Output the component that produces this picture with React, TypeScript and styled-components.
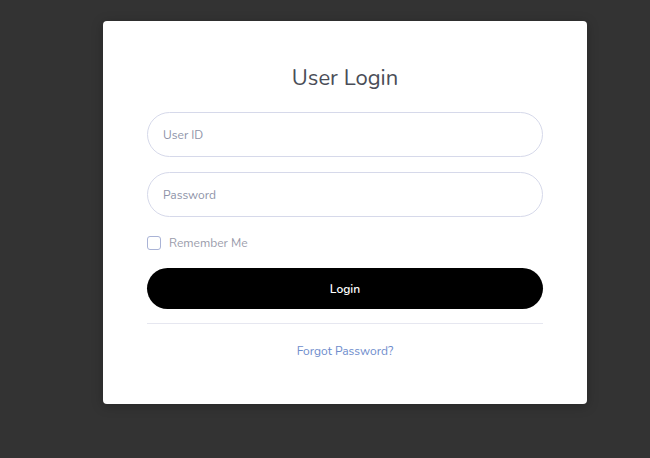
import styled, { createGlobalStyle } from "styled-components";

const GlobalStyle = createGlobalStyle`
  html, body {
    margin: 0;
    padding: 0;
    background: #333333;
  }
  * {
    box-sizing: border-box;
  }
`;

const Page = styled.div`
  min-height: 458px;
  padding: 21px 0 0 103px;
  font-family: "Nunito", Lato, "Noto Sans", sans-serif;
`;

const Card = styled.div`
  width: 484px;
  height: 383px;
  background: #ffffff;
  border-radius: 4px;
  box-shadow: 0 2px 12px rgba(0, 0, 0, 0.25);
  padding: 42px 44px 0;
  display: flex;
  flex-direction: column;
`;

const Title = styled.h1`
  margin: 0 0 19px;
  text-align: center;
  font-size: 22px;
  font-weight: 400;
  line-height: 30px;
  color: #4a4d57;
`;

const Field = styled.input`
  width: 100%;
  height: 45px;
  border: 1px solid #d6d9ea;
  border-radius: 23px;
  padding: 0 15px;
  margin-bottom: 15px;
  font-family: inherit;
  font-size: 12px;
  color: #333;
  outline: none;
  &::placeholder {
    color: #8e93a8;
  }
`;

const CheckRow = styled.label`
  display: flex;
  align-items: center;
  gap: 8px;
  margin: 4px 0 18px;
  font-size: 12px;
  color: #9a9cab;
  height: 14px;
`;

const Box = styled.span`
  width: 14px;
  height: 14px;
  border: 1px solid #a9b3d6;
  border-radius: 3px;
`;

const LoginButton = styled.button`
  width: 100%;
  height: 41px;
  border: none;
  border-radius: 21px;
  background: #000000;
  color: #ffffff;
  font-family: inherit;
  font-size: 12px;
  font-weight: 600;
  cursor: pointer;
`;

const Divider = styled.hr`
  border: none;
  border-top: 1px solid #e6e7f0;
  margin: 14px 0 0;
`;

const Forgot = styled.a`
  align-self: center;
  margin-top: 19px;
  font-size: 12px;
  color: #6e8ccc;
  text-decoration: none;
  cursor: pointer;
`;

export default function App() {
  return (
    <>
      <GlobalStyle />
      <Page>
        <Card>
          <Title>User Login</Title>
          <Field placeholder="User ID" />
          <Field type="password" placeholder="Password" />
          <CheckRow>
            <Box />
            Remember Me
          </CheckRow>
          <LoginButton>Login</LoginButton>
          <Divider />
          <Forgot>Forgot Password?</Forgot>
        </Card>
      </Page>
    </>
  );
}
